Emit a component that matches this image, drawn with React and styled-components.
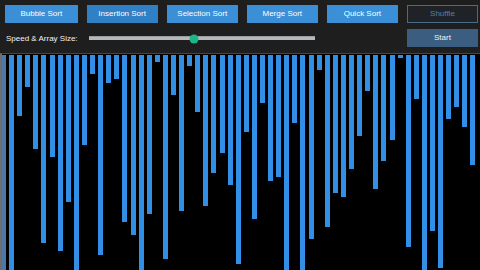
import React from "react";
import styled, { createGlobalStyle } from "styled-components";

const Global = createGlobalStyle`
  html, body {
    margin: 0;
    padding: 0;
    background: #1e1e1e;
    overflow: hidden;
    font-family: "Liberation Sans", Arial, sans-serif;
  }
  #root { height: 270px; }
`;

const Page = styled.div`
  width: 480px;
  height: 270px;
  padding-top: 5px;
  box-sizing: border-box;
  display: flex;
  flex-direction: column;
`;

const Controls = styled.div`
  display: grid;
  grid-template-columns: repeat(6, 1fr);
  grid-auto-rows: 18px;
  column-gap: 9px;
  row-gap: 6px;
  padding: 0 2px 0 5px;
`;

const Button = styled.button`
  margin: 0;
  padding: 0;
  font-family: "Liberation Sans", Arial, sans-serif;
  font-size: 8px;
  line-height: 1;
  border-radius: 0;
  cursor: pointer;
  grid-column: ${(p) => p.$col || "auto"};
  color: ${(p) =>
    p.$variant === "outline" ? "#5b7f9f" : p.$variant === "muted" ? "#eef3f7" : "#ffffff"};
  background: ${(p) =>
    p.$variant === "outline"
      ? "#1f2327"
      : p.$variant === "muted"
      ? "#3b5e80"
      : p.$active
      ? "#2f80c4"
      : "#3a8fd7"};
  border: 1px solid
    ${(p) =>
      p.$variant === "outline" ? "#4a6b88" : p.$variant === "muted" ? "#3b5e80" : "transparent"};
`;

const Label = styled.div`
  display: flex;
  align-items: center;
  color: #f2f2f2;
  font-size: 8px;
  white-space: nowrap;
  padding-left: 1px;
`;

const SliderCell = styled.div`
  grid-column: 2 / span 3;
  display: flex;
  align-items: center;
  padding: 0 3px 0 2px;
`;

const Track = styled.div`
  position: relative;
  flex: 1;
  height: 4px;
  background: #b6b9bc;
  border-top: 1px solid #9a9da0;
  box-sizing: border-box;
`;

const Thumb = styled.div`
  position: absolute;
  top: 50%;
  width: 9px;
  height: 9px;
  border-radius: 50%;
  background: #1fb487;
  transform: translate(-50%, -50%);
`;

const Canvas = styled.div`
  flex: 1;
  margin-top: 6px;
  background: #000;
  border-left: 2px solid #6e6e6e;
  border-top: 1px solid #454545;
  overflow: hidden;
  position: relative;
`;

const Bars = styled.div`
  display: flex;
  align-items: flex-start;
  gap: 3.1px;
  margin-left: -1px;
  padding-top: 1px;
`;

const Bar = styled.div`
  flex: 0 0 5px;
  background: ${(p) => (p.$dim ? "#4d78a6" : "#3190e6")};
`;

const FULL = 240;
const heights = [
  FULL, FULL, 61, 32, 94, 188, 102, 196, 147, FULL,
  90, 19, 200, 28, 24, 167, 180, FULL, 159, 7,
  204, 40, 156, 11, 57, 151, 118, 98, 130, 209,
  77, 164, 48, 126, 122, FULL, 68, FULL, 184, 15,
  172, 138, 142, 114, 81, 36, 134, 106, 85, 3,
  192, 44, FULL, 176, 213, 64, 52, 72, 110,
];

const algorithms = ["Bubble Sort", "Insertion Sort", "Selection Sort", "Merge Sort", "Quick Sort"];

export default function App() {
  const speed = 0.466;
  return (
    <>
      <Global />
      <Page>
        <Controls>
          {algorithms.map((a) => (
            <Button key={a} $active={a === "Insertion Sort"}>
              {a}
            </Button>
          ))}
          <Button $variant="outline">Shuffle</Button>
          <Label>Speed &amp; Array Size:</Label>
          <SliderCell>
            <Track>
              <Thumb style={{ left: `${speed * 100}%` }} />
            </Track>
          </SliderCell>
          <Button $variant="muted" $col="6">
            Start
          </Button>
        </Controls>
        <Canvas>
          <Bars>
            {heights.map((h, i) => (
              <Bar key={i} $dim={i === 0} style={{ height: `${h}px` }} />
            ))}
          </Bars>
        </Canvas>
      </Page>
    </>
  );
}
